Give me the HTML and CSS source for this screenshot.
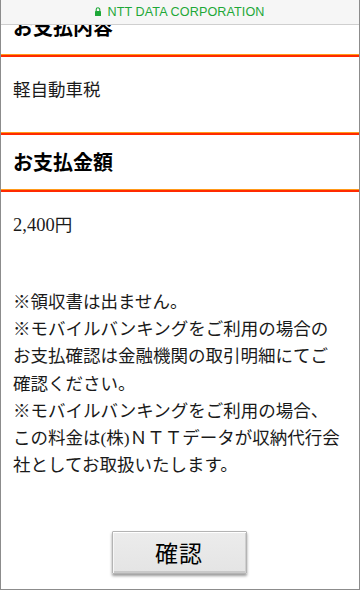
FILE: index.html
```html
<!DOCTYPE html>
<html lang="ja">
<head>
<meta charset="utf-8">
<title>お支払内容</title>
<link rel="stylesheet" href="styles.css">
</head>
<body>
<div class="frame">
  <div class="urlbar">
    <svg class="lock" width="6" height="9" viewBox="0 0 6 9" aria-hidden="true">
      <path d="M1.2 4V2.6a1.8 1.8 0 0 1 3.6 0V4" fill="none" stroke="#1ea838" stroke-width="1.1"/>
      <rect x="0" y="4" width="6" height="5" rx="0.6" fill="#1ea838"/>
    </svg>
    <span class="host">NTT DATA CORPORATION</span>
  </div>
  <div class="content">
    <h2 class="heading heading-first">お支払内容</h2>
    <div class="rule"></div>
    <p class="value value-item">軽自動車税</p>
    <div class="rule"></div>
    <h2 class="heading">お支払金額</h2>
    <div class="rule"></div>
    <p class="value"><span class="num">2,400</span>円</p>
    <p class="notes">※領収書は出ません。<br>※モバイルバンキングをご利用の場合の<br>お支払確認は金融機関の取引明細にてご<br>確認ください。<br>※モバイルバンキングをご利用の場合、<br>この料金は(株)ＮＴＴデータが収納代行会<br>社としてお取扱いたします。</p>
    <div class="actions">
      <button class="confirm" type="button">確認</button>
    </div>
  </div>
</div>
</body>
</html>
```

FILE: styles.css
```css
html, body {
  margin: 0;
  padding: 0;
  background: #ffffff;
}

.frame {
  width: 360px;
  height: 590px;
  box-sizing: border-box;
  border: 1px solid #8c8c8c;
  border-top: none;
  display: flex;
  flex-direction: column;
  overflow: hidden;
  background: #ffffff;
}

.urlbar {
  flex: 0 0 auto;
  height: 24px;
  background: #f6f6f6;
  border-bottom: 1px solid #cfcfcf;
  display: flex;
  align-items: center;
  justify-content: center;
  gap: 6px;
  position: relative;
  z-index: 1;
}

.lock {
  display: block;
  margin-top: -1px;
}

.host {
  font-family: "Liberation Sans", Arial, sans-serif;
  font-size: 12.6px;
  color: #1ea838;
  line-height: 24px;
  letter-spacing: 0.1px;
}

.content {
  flex: 1 1 auto;
  display: flex;
  flex-direction: column;
  font-family: "Liberation Serif", "Noto Sans CJK JP", serif;
  color: #1a1a1a;
}

.heading {
  margin: 0;
  padding: 0 12px;
  height: 54px;
  line-height: 54px;
  font-family: "Noto Sans CJK JP", sans-serif;
  font-size: 20px;
  font-weight: 700;
  color: #000000;
}

.heading-first {
  margin-top: -25px;
}

.rule {
  height: 3px;
  background: linear-gradient(#ff9a1a 0%, #ff9a1a 33%, #ff2a00 34%, #ff2a00 100%);
}

.value {
  margin: 0;
  padding: 20px 12px 0;
  font-size: 17.5px;
  line-height: 26px;
  font-weight: 400;
}

.num {
  font-size: 18.5px;
}

.value-item {
  padding-bottom: 29px;
}

.notes {
  margin: 51px 0 0;
  padding: 0 6px 0 12px;
  font-size: 17.5px;
  line-height: 27.2px;
  font-weight: 400;
  white-space: nowrap;
}

.actions {
  display: flex;
  justify-content: center;
  padding-top: 52px;
}

.confirm {
  width: 135px;
  height: 43px;
  margin-right: 2px;
  padding: 0;
  border: 1px solid #b4b4b4;
  border-radius: 1px;
  background: linear-gradient(#ececec, #e4e4e4);
  box-shadow: inset 0 1px 0 #ffffff, inset 1px 0 0 #f7f7f7, inset -1px 0 0 #cfcfcf, inset 0 -2px 0 #c9c9c9, 0 2px 3px rgba(0, 0, 0, 0.4);
  font-family: "Noto Sans CJK JP", sans-serif;
  font-size: 23px;
  font-weight: 400;
  color: #000000;
  line-height: 41px;
  letter-spacing: 1px;
}
```
